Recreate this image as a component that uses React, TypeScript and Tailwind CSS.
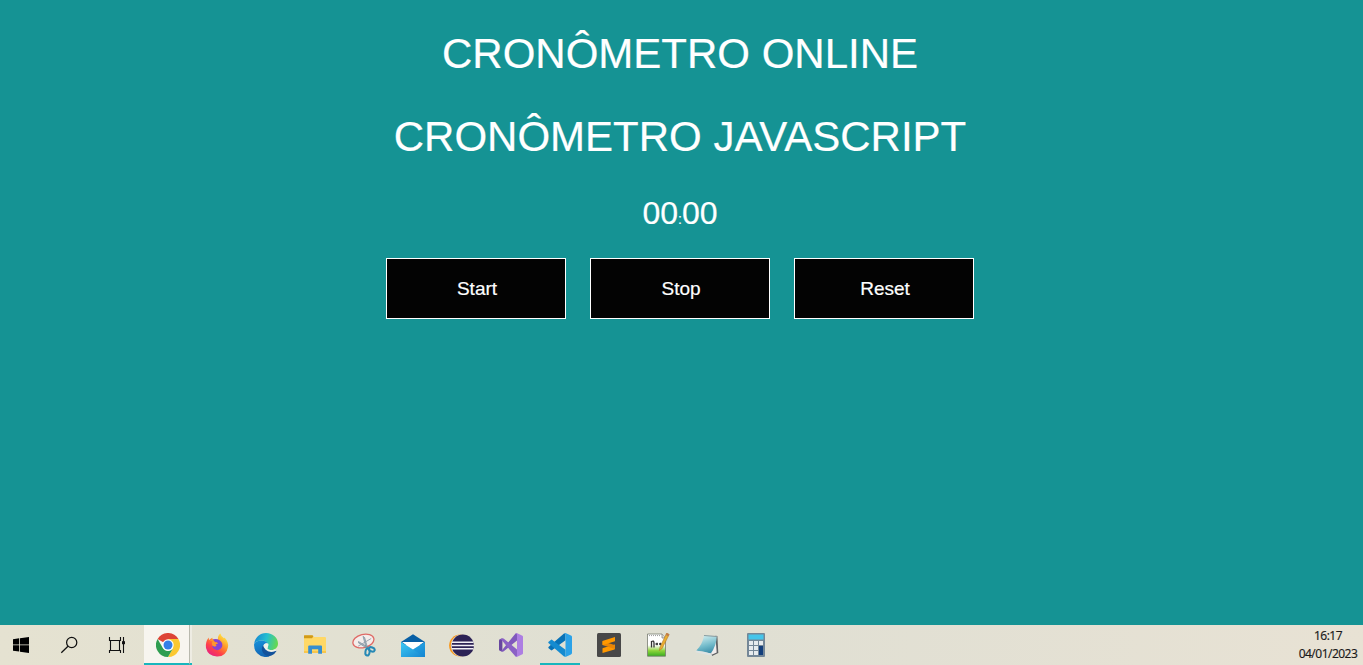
import { useEffect, useState } from "react";
import type { ReactNode } from "react";

const pad = (n: number) => String(n).padStart(2, "0");

function WindowsIcon() {
  return (
    <svg className="h-4 w-4" viewBox="0 0 16 16" fill="#000">
      <path d="M0 2.2 6.2 1.3V7.4H0ZM7 1.2 16 0V7.4H7ZM0 8.3H6.2V14.5L0 13.7ZM7 8.3H16V16L7 14.7Z" />
    </svg>
  );
}

function SearchIcon() {
  return (
    <svg className="h-[18px] w-[18px]" viewBox="0 0 18 18" fill="none" stroke="#111" strokeWidth="1.25">
      <circle cx="11.7" cy="6.5" r="5.1" />
      <path d="M8 10.2 1.3 16.8" />
    </svg>
  );
}

function TaskViewIcon() {
  return (
    <svg className="h-4 w-[18px]" viewBox="0 0 18 16" fill="none" stroke="#111" strokeWidth="1.1">
      <path d="M1.5 0V3.5H12.5V0M1.5 16V13.5H12.5V16M2.5 3.5V13.5M11.5 3.5V13.5M15.5 0V16" />
      <path d="M14 4.2H17V7.2H14Z" fill="#111" stroke="none" />
    </svg>
  );
}

function ChromeIcon() {
  return (
    <svg className="h-6 w-6" viewBox="0 0 24 24">
      <path d="M12 12 1.6 6A12 12 0 0 1 22.4 6Z" fill="#dd4436" />
      <path d="M12 6H22.4A12 12 0 0 1 12 24L17.2 15Z" fill="#fbc831" />
      <path d="M1.6 6 6.8 15A6 6 0 0 0 17.2 15L12 24A12 12 0 0 1 1.6 6Z" fill="#2f9d50" />
      <circle cx="12" cy="12" r="5.7" fill="#fff" />
      <circle cx="12" cy="12" r="4.5" fill="#347fe8" />
    </svg>
  );
}

function FirefoxIcon() {
  return (
    <svg className="h-6 w-6" viewBox="0 0 24 24">
      <defs>
        <linearGradient id="fx" x1="0.85" y1="0.05" x2="0.2" y2="0.95">
          <stop offset="0" stopColor="#fff044" />
          <stop offset=".4" stopColor="#ff9428" />
          <stop offset=".7" stopColor="#ff4149" />
          <stop offset="1" stopColor="#e62181" />
        </linearGradient>
      </defs>
      <path d="M3.7 4.5 4 7 7.2 4.8 7.8 6.6Q10 5.8 13 6.5 12.4 3 15.4.5 16 3.7 19 5.2L19.5 4.5Q23.8 9 23 14 21.3 23.7 12 23.5 3 23.2 1 15 .1 9 3.7 4.5Z" fill="url(#fx)" />
      <path d="M7.8 6.5Q11 5.2 14.6 7.2 18.4 9.9 17 14.1 15.1 17.8 11.4 17 7.5 16.1 7.1 12.3 9 14.2 11.6 12.7L10.3 11.5 12.8 10.5Q12.4 9.2 10.1 9.2Z" fill="#8544d6" />
      <path d="M4.6 7.2Q7.3 5.8 10 9.2 12.3 9 12.9 10.4L10.4 11.6 11.5 12.7Q9.8 14.4 7.3 12.6 6 10.4 7.7 8.3Z" fill="#ff982d" />
    </svg>
  );
}

function EdgeIcon() {
  return (
    <svg className="h-6 w-6" viewBox="0 0 24 24">
      <defs>
        <linearGradient id="eg" x1="0" y1=".3" x2="1" y2=".5">
          <stop offset="0" stopColor="#1787d1" />
          <stop offset=".5" stopColor="#24bfd0" />
          <stop offset="1" stopColor="#67d94e" />
        </linearGradient>
        <linearGradient id="eb" x1="0" y1="0" x2=".3" y2="1">
          <stop offset="0" stopColor="#1693dc" />
          <stop offset="1" stopColor="#1365b4" />
        </linearGradient>
      </defs>
      <path d="M.1 11C.9 4.5 5.9 0 12 0 19.1 0 24 5.1 24 10.6 24 14.6 21 17.1 17.4 17.1 13.7 17.1 13 15.5 13.4 15 14.9 13.2 14.5 8.2 8.5 7.5 4.3 7.4.8 9 .1 11Z" fill="url(#eg)" />
      <path d="M.1 11C1 8.6 4.7 7.3 8.5 7.5Q12.5 7.9 14 10.4 9.8 9.9 9 13.9 8.4 20.8 15.5 23.5 8.3 25.5 3.2 20.2-.3 16.6.1 11Z" fill="url(#eb)" />
      <path d="M14.4 10.8Q10.4 9.2 9.1 13.4 10 18.9 15.4 19.6 19.6 19.7 22.5 17.8 22.6 16.5 20.6 16.6 17.2 17.9 14 16.2 12.7 15.3 14 13.4 14.7 12 14.4 10.8Z" fill="#f0f2ea" />
      <path d="M9.2 12.2Q6.5 15.6 9 19.7 12.3 24.5 17.5 22.6 21 21 22.5 18.1 22.5 17.5 21.6 18 15.2 20.4 11.4 16.6 9.2 14.2 9.2 12.2Z" fill="#13529b" />
    </svg>
  );
}

function FolderIcon() {
  return (
    <svg className="h-5 w-[22px]" viewBox="0 0 22 20">
      <path d="M0 1Q0 .5.6.5H8L10 2H21Q22 2 22 2.9V18H0Z" fill="#ffd866" />
      <path d="M0 1Q0 .3.6.3H8Q9.2.4 9.3 1.5L8 3.2H0Z" fill="#d19a18" />
      <path d="M0 16H22V18H0Z" fill="#f8c64c" />
      <path d="M4.2 18.7V11.3Q4.3 10.4 5.2 10.4H17Q18 10.5 18 11.4V18.7H14.2V14.3H8V18.7Z" fill="#378ed0" />
    </svg>
  );
}

function SnippingIcon() {
  return (
    <svg className="h-6 w-6" viewBox="0 0 24 24" fill="none">
      <ellipse cx="11.4" cy="8" rx="10.7" ry="6.6" transform="rotate(-14 11.4 8)" fill="#f4edeb" stroke="#df6965" strokeWidth="1.3" />
      <path d="M11 3.3 12.7 4.6 15.6 15 14 14.5ZM6.5 8.5 15.7 14.1 15 15.3 6.6 10Z" fill="#adb8bf" stroke="#728796" strokeWidth=".6" />
      <path d="M6.1 13.2 19.2 5.5" stroke="#929eab" strokeWidth=".9" />
      <ellipse cx="15.5" cy="19" rx="2.1" ry="3.6" transform="rotate(8 15.5 19)" stroke="#2789b5" strokeWidth="2" />
      <ellipse cx="19.7" cy="16.4" rx="3.1" ry="2" transform="rotate(20 19.7 16.4)" stroke="#2789b5" strokeWidth="2" />
    </svg>
  );
}

function MailIcon() {
  return (
    <svg className="h-[23px] w-6" viewBox="0 0 24 23">
      <defs>
        <linearGradient id="ml" x2="1" y2="1">
          <stop stopColor="#3dcaf5" />
          <stop offset="1" stopColor="#1685d0" />
        </linearGradient>
      </defs>
      <path d="M0 8 12 .3 24 8V11H0Z" fill="#085fa5" />
      <path d="M1 8H23L12 16Z" fill="#fff" />
      <path d="M0 8 12 15.5 24 8V23H0Z" fill="url(#ml)" />
      <path d="M12 15.5 24 8V23Z" fill="#1489d6" opacity=".35" />
    </svg>
  );
}

function EclipseIcon() {
  return (
    <svg className="h-[23px] w-[25px]" viewBox="0 0 25 23">
      <circle cx="11.2" cy="11.5" r="11.1" fill="#f8981d" />
      <circle cx="12.8" cy="11.5" r="10.9" fill="#e7e2dc" />
      <circle cx="13.8" cy="11.5" r="11.1" fill="#2c2255" />
      <path d="M3 8.2H24.5M2.7 11.5H25M3 14.8H24.5" stroke="#f2eff6" strokeWidth="1.5" />
    </svg>
  );
}

function VisualStudioIcon() {
  return (
    <svg className="h-6 w-6" viewBox="0 0 24 24">
      <path d="M0 7.5Q0 6.7.8 6.3L3.4 5.3V18.7L.8 17.7Q0 17.3 0 16.5Z" fill="#67469f" />
      <path d="M16.5.4 18 0V7.4L4.8 18.3Q4.1 18.9 3.2 18.6L.8 17.7Q2.6 18 3.4 16.7Z" fill="#8059bc" />
      <path d="M.8 6.3 3.2 5.4Q4.1 5 4.9 5.7L18 16.6V24L16.5 23.6 3.4 8Q2.4 6.3.8 6.3Z" fill="#8b61c5" />
      <path d="M16.5.4Q17.3-.2 18.2.2L23 2.4Q24 2.9 24 3.8V20.2Q24 21.1 23 21.6L18.2 23.8Q17.3 24.2 16.5 23.6 18 23.7 18 22V2Q18 .3 16.5.4Z" fill="#ad7ee2" />
    </svg>
  );
}

function CodeIcon() {
  return (
    <svg className="h-6 w-6" viewBox="0 0 24 24">
      <path d="M17.5.4V7.2L4.3 17.1Q3.5 17.7 2.8 17.1L.6 15.2Q-.1 14.4.7 13.7L16 .4Z" fill="#0872b7" />
      <path d="M.7 10.3Q-.1 9.6.6 8.8L2.8 6.9Q3.5 6.3 4.3 6.9L17.5 16.8V23.6L16 23.4Z" fill="#158bd0" />
      <path d="M16 .4Q17-.1 18 .3L23 2.6Q24 3.1 24 4V20Q24 20.9 23 21.4L18 23.7Q17 24.1 16 23.4 17.5 24 17.5 22V2Q17.5 0 16 .4Z" fill="#2ba2e8" />
    </svg>
  );
}

function SublimeIcon() {
  return (
    <svg className="h-6 w-6" viewBox="0 0 24 24">
      <rect width="24" height="24" rx="1.5" fill="#484848" />
      <path d="M5.5 15.6Q5.5 15.2 6 15L18 11.4V15.6Q18 16.2 17.5 16.4L5.5 20Z" fill="#ff9800" />
      <path d="M5.5 8.3 17.5 12Q18 12.2 18 12.8V16L6 12.3Q5.5 12.1 5.5 11.6Z" fill="#e98505" />
      <path d="M5.5 8.6Q5.5 7.9 6.1 7.7L18 4V8.2L6 12Q5.5 12 5.5 11.5Z" fill="#ff9800" />
    </svg>
  );
}

function NotepadPlusIcon() {
  return (
    <svg className="h-6 w-6" viewBox="0 0 24 24">
      <defs>
        <linearGradient id="np" x1="0" y1="0" x2="0" y2="1">
          <stop offset=".5" stopColor="#fff" />
          <stop offset=".75" stopColor="#8dd43a" />
          <stop offset="1" stopColor="#38ad20" />
        </linearGradient>
      </defs>
      <path d="M1.5 1H16L19.5 5V23.2H1.5Z" fill="url(#np)" stroke="#777b70" strokeWidth=".8" />
      <path d="M3 2.6H14" stroke="#999" strokeDasharray="1 1" />
      <path d="M16 1V5H19.5" fill="#ddd" stroke="#777" strokeWidth=".7" />
      <path d="M5.5 14.5V8M5.5 8.5Q8 7.1 8 10V14.5M9.5 11H12M11 9.7V12.3M13 11H15.5M14.5 9.7V12.3" fill="none" stroke="#333" strokeWidth="1.3" />
      <path d="M20.7 0 23.2 1.4 16.2 15.5 13.3 17.5 14 14Z" fill="#e9ae32" stroke="#a86c20" strokeWidth=".5" />
      <path d="M20.7 0 23.2 1.4 22.3 3.2 19.7 1.9Z" fill="#c27a4c" />
    </svg>
  );
}

function NotepadIcon() {
  return (
    <svg className="h-[23px] w-6" viewBox="0 0 24 23">
      <defs>
        <linearGradient id="nt" x1=".3" x2=".6" y2="1">
          <stop stopColor="#d2eef0" />
          <stop offset=".6" stopColor="#6fb9c9" />
          <stop offset="1" stopColor="#3b8ca7" />
        </linearGradient>
      </defs>
      <path d="M20.5 1.8 22.4 2 23.3 19 17 22 15.5 18Z" fill="#5f6164" />
      <path d="M20.6 5 21.7 18.4 16.5 20.7 15.5 17Z" fill="#f1eded" />
      <path d="M9 1.2 21.8 2.3Q21.4 12 15.8 19.4L1.3 16.4Q7.6 10.5 9 1.2Z" fill="url(#nt)" />
      <path d="M9 1.5 21.8 2.5" stroke="#899a9d" strokeWidth="1.2" />
      <path d="M.5 16.7Q8 16.9 16 19.6L17 22 .8 18.3Z" fill="#dfe3e2" />
    </svg>
  );
}

function CalculatorIcon() {
  return (
    <svg className="h-6 w-[18px]" viewBox="0 0 18 24">
      <rect width="18" height="24" rx="1" fill="#748797" />
      <rect x="1.5" y="1.5" width="15" height="5" fill="#45c5ea" />
      <path d="M2 8H6V12H2ZM7 8H11V12H7ZM12 8H16V12H12ZM2 13H6V17H2ZM7 13H11V17H7ZM2 18H6V22H2ZM7 18H11V22H7Z" fill="#e6ebee" />
      <path d="M12 13H16V22H12Z" fill="#123e7b" />
    </svg>
  );
}

const apps: { name: string; icon: ReactNode; open?: boolean }[] = [
  { name: "firefox", icon: <FirefoxIcon /> },
  { name: "edge", icon: <EdgeIcon /> },
  { name: "folder", icon: <FolderIcon /> },
  { name: "snip", icon: <SnippingIcon /> },
  { name: "mail", icon: <MailIcon /> },
  { name: "eclipse", icon: <EclipseIcon /> },
  { name: "vs", icon: <VisualStudioIcon /> },
  { name: "code", icon: <CodeIcon />, open: true },
  { name: "sublime", icon: <SublimeIcon /> },
  { name: "npp", icon: <NotepadPlusIcon /> },
  { name: "notepad", icon: <NotepadIcon /> },
  { name: "calc", icon: <CalculatorIcon /> },
];

function Taskbar() {
  return (
    <footer className="flex h-10 shrink-0 justify-between bg-linear-to-r from-[#e5e2d1] via-[#dfdfd3] to-[#e8e2d4]">
      <div className="flex">
        <div className="flex w-[42px] items-center justify-center"><WindowsIcon /></div>
        <div className="flex w-[54px] items-center justify-center"><SearchIcon /></div>
        <div className="flex w-[42px] items-center justify-center"><TaskViewIcon /></div>
        <div className="ml-[6px] flex w-[45px] items-center justify-center border-b-2 border-[#18b6bd] bg-[#f7f5ef] pl-[2px] pt-[2px]"><ChromeIcon /></div>
        <div className="w-[3px] border-b-2 border-l border-b-[#18b6bd] border-l-[#b9b9ae] bg-[#eeece3]" />
        {apps.map((app) => (
          <div key={app.name} className="flex w-[49px] items-center justify-center">
            <div className={app.open ? "flex h-full w-10 items-center justify-center border-b-2 border-[#18b6bd] pt-[2px]" : "flex h-full w-10 items-center justify-center"}>
              {app.icon}
            </div>
          </div>
        ))}
      </div>
      <div className="flex w-[70px] flex-col items-center pt-[2px] font-['Open_Sans',sans-serif] text-[12px] leading-[18px] tracking-[-0.5px] text-[#181818]">
        <span>16:17</span>
        <span>04/01/2023</span>
      </div>
    </footer>
  );
}

export default function App() {
  const [seconds, setSeconds] = useState(0);
  const [running, setRunning] = useState(false);

  useEffect(() => {
    if (!running) return;
    const id = window.setInterval(() => setSeconds((s) => s + 1), 1000);
    return () => window.clearInterval(id);
  }, [running]);

  const button = "h-[61px] w-[180px] cursor-pointer border border-white bg-[#030303] pl-[2px] pt-[2px] text-[19px]";

  return (
    <div className="flex h-screen flex-col overflow-hidden bg-[#159394] font-['Liberation_Sans',Arial,sans-serif] text-white [-webkit-text-stroke:0.2px]">
      <main className="flex grow flex-col items-center pr-[3px] pt-[30px]">
        <h1 className="text-[42px] leading-[48px]">CRONÔMETRO ONLINE</h1>
        <h1 className="mt-[35px] text-[42px] leading-[48px]">CRONÔMETRO JAVASCRIPT</h1>
        <div className="mt-[34px] flex h-[37px] items-baseline text-[32px] leading-[37px]">
          <span>{pad(Math.floor(seconds / 60))}</span>
          <span className="w-[4px] text-center text-[14px]">:</span>
          <span>{pad(seconds % 60)}</span>
        </div>
        <div className="mt-[26px] flex gap-6">
          <button className={button} onClick={() => setRunning(true)}>Start</button>
          <button className={button} onClick={() => setRunning(false)}>Stop</button>
          <button className={button} onClick={() => { setRunning(false); setSeconds(0); }}>Reset</button>
        </div>
      </main>
      <Taskbar />
    </div>
  );
}
